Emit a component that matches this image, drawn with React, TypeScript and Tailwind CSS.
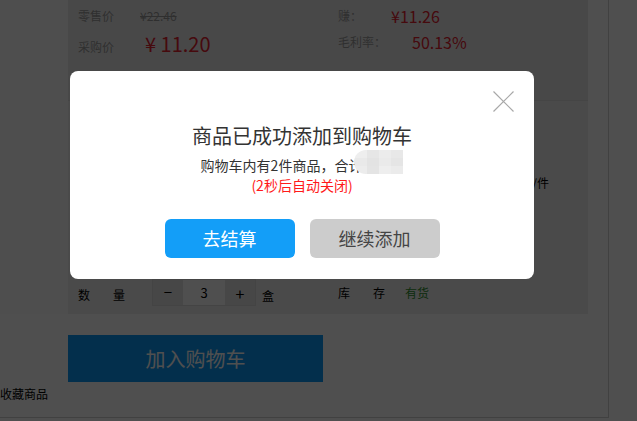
export default function App() {
  const font = { fontFamily: '"Microsoft YaHei", "Noto Sans CJK SC", "Noto Sans", sans-serif' }

  return (
    <div className="relative w-[637px] h-[421px] overflow-hidden bg-white text-[12px] text-black" style={font}>

      {/* PAGE BEHIND THE DIALOG */}

      <div className="w-[609px] h-[418px] border-r border-b border-[#d2d2d2] flex flex-col">

        <div className="flex">

          <div className="w-[68px] bg-[#fafafa]" />

          <div className="w-[520px] flex flex-col">

            {/* PRICE BLOCK */}

            <div className="h-[101px] bg-[#e9e9e9] border-b border-[#dedede] flex pl-[10px]">
              <div className="w-[260px] flex flex-col">
                <div className="flex items-center h-[20px] mt-[6px]">
                  <span className="w-[62px] text-[#999]">零售价</span>
                  <span className="text-[#999] line-through">¥22.46</span>
                </div>
                <div className="flex items-center h-[28px] mt-[4px]">
                  <span className="w-[67px] text-[#999] mt-[6px]">采购价</span>
                  <span className="text-[20px] text-[#e0202e] leading-[28px]">¥ 11.20</span>
                </div>
              </div>
              <div className="flex flex-col">
                <div className="flex items-center h-[20px] mt-[6px]">
                  <span className="w-[53px] text-[#999]">赚：</span>
                  <span className="text-[16px] text-[#e0202e]">¥11.26</span>
                </div>
                <div className="flex items-center h-[24px] mt-[4px]">
                  <span className="w-[74px] text-[#999]">毛利率：</span>
                  <span className="text-[16px] text-[#e0202e]">50.13%</span>
                </div>
              </div>
            </div>

            {/* SPEC + QUANTITY */}

            <div className="h-[213px] bg-[#eeeeee] flex flex-col pl-[10px]">
              <div className="flex justify-between items-center h-[16px] mt-[74px] pr-[39px]">
                <span>规 格</span>
                <span>单价：¥1.12元/件</span>
              </div>
              <div className="flex items-center mt-[88px] h-[27px]">
                <div className="flex w-[47px] justify-between mt-[4px]">
                  <span>数</span>
                  <span>量</span>
                </div>
                <div className="ml-[27px] flex h-[27px] border border-[#dcdcdc]">
                  <span className="w-[30px] bg-[#e4e4e4] flex items-center justify-center text-[15px]">−</span>
                  <span className="w-[42px] bg-white flex items-center justify-center text-[13px]">3</span>
                  <span className="w-[30px] bg-[#e4e4e4] flex items-center justify-center text-[16px]">+</span>
                </div>
                <span className="ml-[6px] mt-[6px]">盒</span>
                <div className="ml-[64px] flex items-center">
                  <div className="flex w-[47px] justify-between">
                    <span>库</span>
                    <span>存</span>
                  </div>
                  <span className="ml-[20px] text-[#2f8f2f]">有货</span>
                </div>
              </div>
            </div>

          </div>

        </div>

        <div className="pl-[68px] pt-[21px]">
          <button className="w-[255px] h-[47px] bg-[#0b98f5] text-white text-[20px]">
            加入购物车
          </button>
        </div>

        <div className="mt-[4px] leading-[16px]">收藏商品</div>

      </div>

      {/* BACKDROP */}

      <div className="absolute inset-0 bg-black/[0.69]" />

      {/* DIALOG */}

      <div className="absolute left-[70px] top-[71px] w-[464px] h-[208px] bg-white rounded-[8px] flex flex-col items-center pt-[52px]">

        <svg className="absolute right-[20px] top-[20px]" width="21" height="21" viewBox="0 0 21 21">
          <path d="M0.5 0.5 L20.5 20.5 M20.5 0.5 L0.5 20.5" stroke="#a8a8a8" strokeWidth="1.2" fill="none" />
        </svg>

        <div className="text-[20px] leading-[26px] text-[#333]">商品已成功添加到购物车</div>

        <div className="flex h-[18px] mt-[7px] text-[14px] leading-[18px] text-[#333]">
          <span>购物车内有2件商品，合计</span>
          <div className="self-end -ml-[8px] w-[49px] h-[24px] rounded-l-[12px] overflow-hidden grid grid-cols-4 grid-rows-3">
            <div className="bg-[#eeeeee]" />
            <div className="bg-[#e6e6e6]" />
            <div className="bg-[#ececec]" />
            <div className="bg-[#e8e8e8]" />
            <div className="bg-[#e9e9e9]" />
            <div className="bg-[#e3e3e3]" />
            <div className="bg-[#eaeaea]" />
            <div className="bg-[#e5e5e5]" />
            <div className="bg-[#ececec]" />
            <div className="bg-[#e4e4e4]" />
            <div className="bg-[#eeeeee]" />
            <div className="bg-[#ebebeb]" />
          </div>
        </div>

        <div className="mt-[2px] text-[14px] leading-[18px] text-[#ff1a1a]">(2秒后自动关闭)</div>

        <div className="flex gap-[15px] mt-[25px]">
          <button className="w-[130px] h-[39px] rounded-[6px] bg-[#139ef8] text-white text-[18px]">去结算</button>
          <button className="w-[130px] h-[39px] rounded-[6px] bg-[#cccccc] text-[#444] text-[18px]">继续添加</button>
        </div>

      </div>

    </div>
  )
}
